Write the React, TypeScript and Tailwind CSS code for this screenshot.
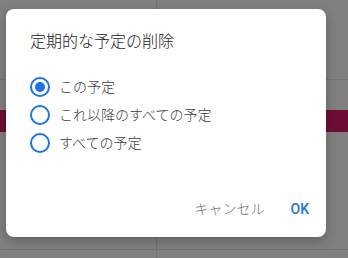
import { useState } from "react";

const options = ["この予定", "これ以降のすべての予定", "すべての予定"];

function Radio({ checked }: { checked: boolean }) {
  return (
    <span className="flex h-[20px] w-[20px] shrink-0 items-center justify-center rounded-full border-2 border-[#1a73e8]">
      {checked && <span className="h-[10px] w-[10px] rounded-full bg-[#1a73e8]" />}
    </span>
  );
}

export default function App() {
  const [selected, setSelected] = useState(0);

  return (
    <div
      className="relative h-[258px] w-[348px] overflow-hidden bg-[#808080]"
      style={{ fontFamily: 'Roboto, "Noto Sans CJK JP", sans-serif' }}
    >
      {/* calendar behind the scrim */}
      <div className="absolute left-[156px] top-0 h-full w-px bg-[#727272]" />
      <div className="absolute left-0 top-[79px] h-px w-full bg-[#727272]" />
      <div className="absolute left-0 top-[110px] h-[22px] w-full bg-[#6f0d37]" />
      <div className="absolute left-0 top-[249px] h-px w-full bg-[#727272]" />

      {/* dialog */}
      <div className="absolute left-[6px] top-[9px] flex h-[228px] w-[320px] flex-col rounded-lg bg-white shadow-[0_4px_12px_rgba(0,0,0,0.25)]">
        <h2 className="px-6 pt-[21px] text-[16px] font-light leading-[24px] text-[#202124]">定期的な予定の削除</h2>

        <div className="mt-[19px] flex flex-col px-6">
          {options.map((label, i) => (
            <label
              key={label}
              className="flex h-[28px] cursor-pointer items-center gap-[9px]"
              onClick={() => setSelected(i)}
            >
              <Radio checked={selected === i} />
              <span className="text-[14px] font-light leading-[20px] text-[#3c4043]">{label}</span>
            </label>
          ))}
        </div>

        <div className="mt-auto flex justify-end gap-[10px] pb-[10px] pr-[9px]">
          <button className="h-[36px] rounded px-2 text-[14px] font-light text-[#6f7378]">キャンセル</button>
          <button className="h-[36px] rounded px-2 text-[14px] font-medium text-[#1a73e8]">OK</button>
        </div>
      </div>
    </div>
  );
}
